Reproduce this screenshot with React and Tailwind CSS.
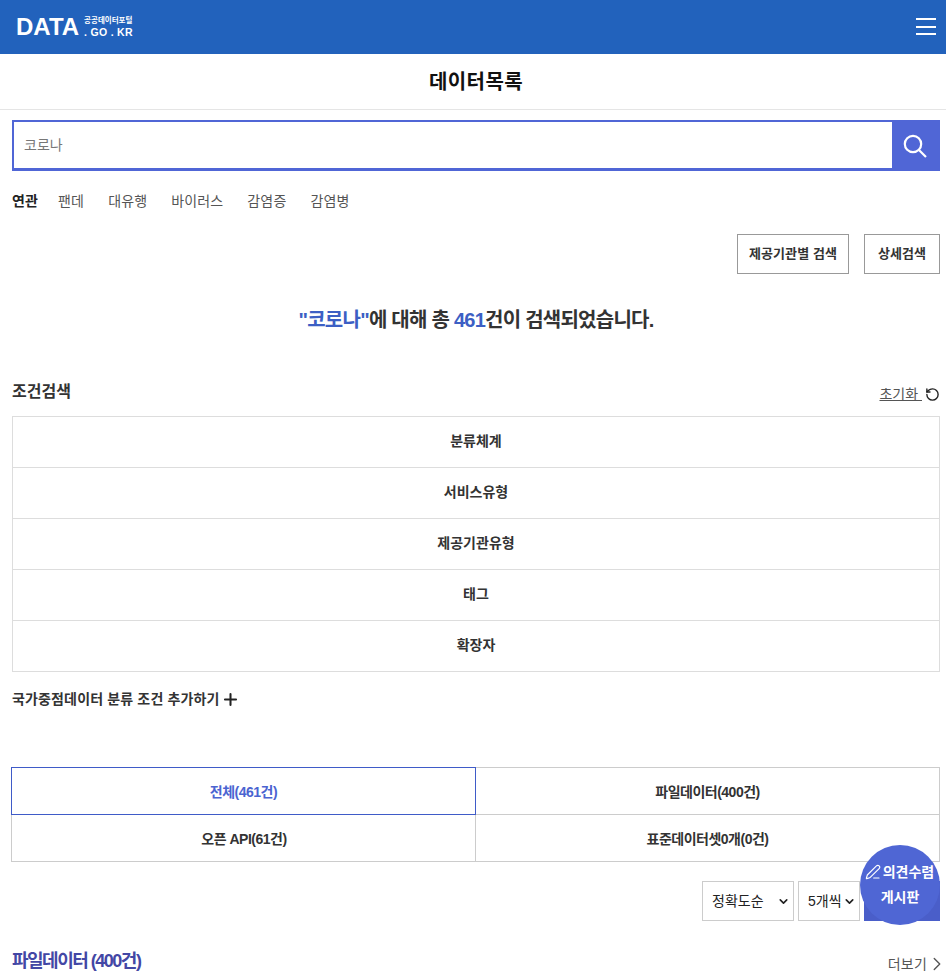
import { ChevronDown, ChevronRight, PenLine, Plus, RotateCcw } from 'lucide-react';

const KOREAN = "font-['Liberation_Sans','Noto_Sans_CJK_KR',sans-serif]";

const RELATED = ['팬데', '대유행', '바이러스', '감염증', '감염병'];
const FILTERS = ['분류체계', '서비스유형', '제공기관유형', '태그', '확장자'];

function Logo() {
    return (
        <div className="flex items-center gap-[5px] text-white">
            <span className="text-[24px] leading-none font-bold">DATA</span>
            <div className="flex flex-col">
                <span className="text-[7.5px] leading-[10px] font-bold whitespace-nowrap">공공데이터포털</span>
                <span className="text-[10.5px] leading-[12px] font-bold tracking-[0.3px] whitespace-nowrap">. GO . KR</span>
            </div>
        </div>
    );
}

function Select({ label, width }) {
    return (
        <div className={`h-10 ${width} border border-[#cccccc] bg-white flex items-center justify-between pl-[9px] pr-[3px] text-sm text-[#222] whitespace-nowrap`}>
            <span>{label}</span>
            <ChevronDown size={13} strokeWidth={3} className="shrink-0" />
        </div>
    );
}

export default function App() {
    return (
        <div className={`relative h-[974px] overflow-hidden bg-white ${KOREAN}`}>
            <header className="h-[54px] bg-[#2262bc] flex items-center justify-between pl-4 pr-[10px]">
                <Logo />
                <div className="w-5 -mt-px flex flex-col gap-[5.5px]">
                    <div className="h-0.5 bg-white" />
                    <div className="h-0.5 bg-white" />
                    <div className="h-0.5 bg-white" />
                </div>
            </header>

            <h1 className="h-[56px] pl-[6px] border-b border-[#e5e5e5] flex items-center justify-center text-xl font-bold tracking-[0.4px] text-[#111]">
                데이터목록
            </h1>

            <div className="pl-3 pr-[6px] pt-[10px]">
                <div className="h-[51px] flex border-2 border-b-[3px] border-[#5066d6]">
                    <div className="flex-1 flex items-center pl-[10px] text-sm text-[#777]">코로나</div>
                    <div className="w-[48px] -mt-[2px] -mb-[3px] -mr-[2px] bg-[#5066d6] flex items-center justify-center">
                        <svg width="24" height="24" viewBox="0 0 24 24" fill="none" stroke="white" strokeWidth="2.2" className="-ml-[2px]">
                            <circle cx="10" cy="10" r="8.2" />
                            <path d="M16 16l7 7" />
                        </svg>
                    </div>
                </div>

                <div className="mt-[20px] h-5 flex items-center text-sm tracking-[0.15px] text-[#555]">
                    <strong className="mr-5 text-[#222]">연관</strong>
                    <div className="flex gap-6">
                        {RELATED.map((tag) => (
                            <span key={tag}>{tag}</span>
                        ))}
                    </div>
                </div>

                <div className="mt-[23px] flex justify-end gap-[15px]">
                    <button className="h-10 w-[112px] border border-[#999] text-[13px] tracking-[0.1px] font-bold text-[#333]">제공기관별 검색</button>
                    <button className="h-10 w-[76px] border border-[#999] text-[13px] font-bold text-[#333]">상세검색</button>
                </div>

                <p className="mt-[32px] h-7 flex items-center justify-center text-xl font-bold tracking-[-0.75px] text-[#333]">
                    <span className="text-[#3c5fc4]">"코로나"</span>
                    <span>에 대해 총&nbsp;</span>
                    <span className="text-[#3c5fc4]">461</span>
                    <span>건이 검색되었습니다.</span>
                </p>

                <div className="mt-[46px] h-[24px] flex items-center justify-between">
                    <h2 className="text-base font-bold text-[#333]">조건검색</h2>
                    <a className="mt-1 flex items-center gap-[3px] text-sm text-[#555]">
                        <span className="underline">초기화&nbsp;</span>
                        <RotateCcw size={15} strokeWidth={2.2} className="text-[#222]" />
                    </a>
                </div>

                <ul className="mt-[12px] border border-[#dddddd]">
                    {FILTERS.map((filter, i) => (
                        <li
                            key={filter}
                            className={`pb-0.5 flex items-center justify-center text-sm font-bold text-[#333] ${i > 0 ? 'h-[51px] border-t border-[#dddddd]' : 'h-[50px]'}`}
                        >
                            {filter}
                        </li>
                    ))}
                </ul>

                <div className="mt-[17px] h-5 flex items-center gap-[1px] text-sm font-bold tracking-[0.15px] text-[#333]">
                    <span>국가중점데이터 분류 조건 추가하기</span>
                    <Plus size={19} strokeWidth={2.6} className="text-[#222]" />
                </div>
            </div>

            <div className="mt-[58px] ml-[11px] mr-[6px] grid grid-cols-[465px_1fr] border-b border-r border-[#cccccc] text-sm font-bold tracking-[-0.5px] text-[#333]">
                <div className="relative h-[48px] -mb-px pt-0.5 border border-[#3f5bc8] text-[#4b64d1] flex items-center justify-center">전체(461건)</div>
                <div className="h-[47px] pt-0.5 border-t border-[#cccccc] flex items-center justify-center">파일데이터(400건)</div>
                <div className="h-[47px] pt-0.5 border-l border-t border-[#cccccc] flex items-center justify-center">오픈 API(61건)</div>
                <div className="h-[47px] pt-0.5 -ml-px border-l border-t border-[#cccccc] flex items-center justify-center">표준데이터셋0개(0건)</div>
            </div>

            <div className="mt-[19px] pr-[6px] flex justify-end gap-1">
                <Select label="정확도순" width="w-[92px]" />
                <Select label="5개씩" width="w-[62px]" />
                <div className="h-10 w-[76px] bg-[#4a5ec9]" />
            </div>

            <div className="mt-[26px] pl-3 pr-[6px] flex items-center justify-between">
                <h2 className="text-lg font-bold tracking-[-1.5px] text-[#4347a5]">파일데이터 (400건)</h2>
                <a className="mt-[5px] flex items-center text-sm tracking-[0.2px] text-[#555]">
                    더보기
                    <ChevronRight size={22} strokeWidth={1.5} className="-ml-px -mr-[8px]" />
                </a>
            </div>

            <div className="absolute left-[860px] top-[845px] w-20 h-20 pb-0.5 rounded-full bg-[#4f66d4] flex flex-col items-center justify-center gap-[5px] text-sm font-bold text-white whitespace-nowrap">
                <div className="flex items-center gap-[2px] -ml-[1px]">
                    <PenLine size={16} strokeWidth={1.75} />
                    <span>의견수렴</span>
                </div>
                <span>게시판</span>
            </div>
        </div>
    );
}
